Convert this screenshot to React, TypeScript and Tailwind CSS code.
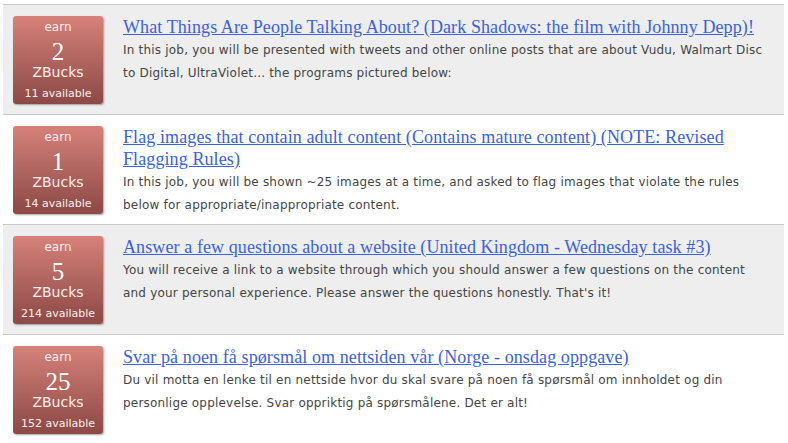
const jobs = [
  {
    earn: "2",
    available: 11,
    title:
      "What Things Are People Talking About? (Dark Shadows: the film with Johnny Depp)!",
    description:
      "In this job, you will be presented with tweets and other online posts that are about Vudu, Walmart Disc to Digital, UltraViolet... the programs pictured below:",
  },
  {
    earn: "1",
    available: 14,
    title:
      "Flag images that contain adult content (Contains mature content) (NOTE: Revised Flagging Rules)",
    description:
      "In this job, you will be shown ~25 images at a time, and asked to flag images that violate the rules below for appropriate/inappropriate content.",
  },
  {
    earn: "5",
    available: 214,
    title:
      "Answer a few questions about a website (United Kingdom - Wednesday task #3)",
    description:
      "You will receive a link to a website through which you should answer a few questions on the content and your personal experience. Please answer the questions honestly. That's it!",
  },
  {
    earn: "25",
    available: 152,
    title: "Svar på noen få spørsmål om nettsiden vår (Norge - onsdag oppgave)",
    description:
      "Du vil motta en lenke til en nettside hvor du skal svare på noen få spørsmål om innholdet og din personlige opplevelse. Svar oppriktig på spørsmålene. Det er alt!",
  },
];

const sans = "font-['DejaVu_Sans','Liberation_Sans',sans-serif]";
const serif = "font-['Liberation_Serif','DejaVu_Serif',serif]";

const App = () => {
  return (
    <div className="w-[788px] h-[443px] overflow-hidden bg-white pt-1 pl-[3px] pr-1">
      <div className="border-t border-[#c8c8c8]">
        {jobs.map((job, index) => (
          <div
            key={index}
            className={`${index % 2 === 0 ? "bg-[#eeeeee]" : "bg-white"} h-[110px] flex gap-5 border-b border-[#c8c8c8] pt-[11px] pl-[10px]`}
          >
            <div className="w-[90px] h-[88px] shrink-0 rounded-[3px] bg-gradient-to-b from-[#d6827a] to-[#8c4946] shadow-[1px_1px_2px_rgba(0,0,0,0.35)] flex flex-col items-center text-[#fbeeed]">
              <p className={`${sans} text-[12px] leading-[14px] mt-[4px]`}>earn</p>
              <p className={`${serif} text-[25px] leading-[24px] mt-[6px] text-white`}>
                {job.earn}
              </p>
              <p className={`${sans} text-[14px] leading-[16px]`}>ZBucks</p>
              <p className={`${sans} text-[11px] leading-[13px] mt-[7px]`}>
                {job.available} available
              </p>
            </div>
            <div className="flex flex-col w-[640px]">
              <a
                href="#"
                className={`${serif} text-[18px] leading-[22px] tracking-[0.1px] text-[#3a62e0] underline`}
              >
                {job.title}
              </a>
              <p
                className={`${sans} text-[12px] leading-[23px] tracking-[0.2px] text-[#454545] mt-[1px]`}
              >
                {job.description}
              </p>
            </div>
          </div>
        ))}
      </div>
    </div>
  );
};

export default App;
